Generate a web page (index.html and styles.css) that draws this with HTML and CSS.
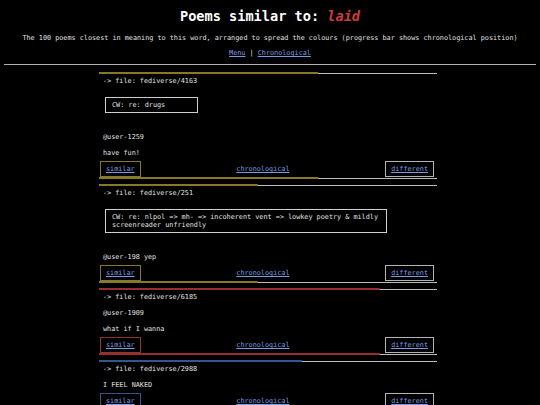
FILE: index.html
```html
<!DOCTYPE html>
<html lang="en">
  <head>
    <meta http-equiv="Content-Type" content="text/html;charset=utf-8" />
    <meta name="viewport" content="width=device-width, initial-scale=1.0" />
    <title>Poems similar to: laid</title>
    <link rel="stylesheet" href="styles.css">
  </head>
  <body>
    <header class="header">
      <h1>Poems similar to: <em class="h1__em--word">laid</em></h1>
      <p class="p--intro">The 100 poems closest in meaning to this word, arranged to spread the colours (progress bar shows chronological position)</p>
      <p class="p--nav"><a href="#">Menu</a> | <a href="#">Chronological</a></p>
    </header>
    <hr />
    <main class="feed">
      <article class="poem" style="--c: #8a7824; --p: 64.8%">
        <div class="poem__bar"></div>
        <p class="poem__file">-&gt; file: fediverse/4163</p>
        <div class="poem__cw"><span class="poem__cw-text poem__cw-text--short">CW: re: drugs</span></div>
        <p class="poem__user">@user-1259</p>
        <p>have fun!</p>
        <nav class="poem__nav">
          <a href="#" class="poem__btn poem__btn--similar">similar</a>
          <a href="#">chronological</a>
          <a href="#" class="poem__btn">different</a>
        </nav>
        <div class="poem__bar"></div>
      </article>
      <article class="poem" style="--c: #8a7824; --p: 47%">
        <div class="poem__bar"></div>
        <p class="poem__file">-&gt; file: fediverse/251</p>
        <div class="poem__cw"><span class="poem__cw-text">CW: re: nlpol =&gt; mh- =&gt; incoherent vent =&gt; lowkey poetry &amp; mildly screenreader unfriendly</span></div>
        <p class="poem__user">@user-198 yep</p>
        <nav class="poem__nav">
          <a href="#" class="poem__btn poem__btn--similar">similar</a>
          <a href="#">chronological</a>
          <a href="#" class="poem__btn">different</a>
        </nav>
        <div class="poem__bar"></div>
      </article>
      <article class="poem" style="--c: #963030; --p: 83%">
        <div class="poem__bar"></div>
        <p class="poem__file">-&gt; file: fediverse/6185</p>
        <p>@user-1909</p>
        <p>what if I wanna</p>
        <nav class="poem__nav">
          <a href="#" class="poem__btn poem__btn--similar">similar</a>
          <a href="#">chronological</a>
          <a href="#" class="poem__btn">different</a>
        </nav>
        <div class="poem__bar"></div>
      </article>
      <article class="poem" style="--c: #34558f; --p: 60%">
        <div class="poem__bar"></div>
        <p class="poem__file">-&gt; file: fediverse/2988</p>
        <p>I FEEL NAKED</p>
        <nav class="poem__nav">
          <a href="#" class="poem__btn poem__btn--similar">similar</a>
          <a href="#">chronological</a>
          <a href="#" class="poem__btn">different</a>
        </nav>
        <div class="poem__bar"></div>
      </article>
    </main>
  </body>
</html>
```

FILE: styles.css
```css
body {
  font-family: "DejaVu Sans Mono", monospace;
  font-size: 6.8px;
  line-height: 8px;
  margin: 0;
  padding: 0 4px;
  color: #e0e0e0;
  background-color: #000;
}
a,
a:visited {
  color: #7d9be0;
  text-decoration: underline;
}
p {
  margin: 8px 0 0;
}
.header {
  text-align: center;
}
h1 {
  font-size: 13.6px;
  line-height: 16px;
  margin: 8px 0 0;
  color: #fff;
}
.h1__em--word {
  color: #d23b3b;
}
.p--intro {
  margin-top: 10px;
}
.p--nav {
  margin-top: 7px;
}
hr {
  height: 0;
  border: 0;
  border-top: 1px solid #b0b0b0;
  margin: 7px 0 0;
}
.feed {
  width: 338px;
  margin: 7px 0 0 calc(50% - 171px);
}
.poem {
  margin-bottom: 5px;
}
.poem__bar {
  height: 2px;
  background:
    linear-gradient(var(--c), var(--c)) no-repeat left top / var(--p) 2px,
    linear-gradient(#bdbdbd, #bdbdbd) no-repeat left bottom / 100% 1px;
}
.poem p {
  padding: 0 4px;
}
.poem .poem__file {
  margin-top: 3px;
}
.poem__cw {
  display: flex;
  align-items: flex-start;
  margin: 12px 6px 0;
}
.poem__cw-text {
  max-width: 268px;
  border: 1px solid #cfcfcf;
  padding: 3px 6px;
}
.poem__cw-text--short {
  min-width: 79px;
}
.poem .poem__user {
  margin-top: 20px;
}
.poem__nav {
  display: flex;
  justify-content: space-between;
  align-items: center;
  height: 16px;
  margin: 4px 3px 0 1px;
}
.poem__btn {
  border: 1px solid #b5b5b5;
  padding: 3px 5px;
}
.poem__btn--similar {
  border-color: var(--c);
}
```
